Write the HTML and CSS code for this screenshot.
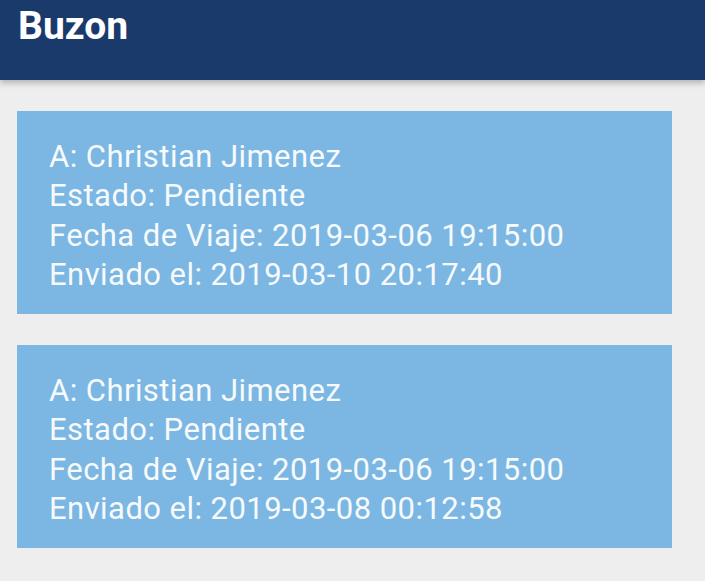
FILE: index.html
```html
<!DOCTYPE html>
<html lang="es">
<head>
<meta charset="utf-8">
<title>Buzon</title>
<link rel="stylesheet" href="styles.css">
</head>
<body>
<header class="appbar">
  <h1 class="title">Buzon</h1>
</header>
<main class="list">
  <section class="card">
    <p>A: Christian Jimenez</p>
    <p>Estado: Pendiente</p>
    <p>Fecha de Viaje: 2019-03-06 19:15:00</p>
    <p>Enviado el: 2019-03-10 20:17:40</p>
  </section>
  <section class="card">
    <p>A: Christian Jimenez</p>
    <p>Estado: Pendiente</p>
    <p>Fecha de Viaje: 2019-03-06 19:15:00</p>
    <p>Enviado el: 2019-03-08 00:12:58</p>
  </section>
</main>
</body>
</html>
```

FILE: styles.css
```css
html, body {
  margin: 0;
  padding: 0;
  background: #eeeeee;
  font-family: Roboto, "Liberation Sans", sans-serif;
  width: 705px;
  height: 581px;
  overflow: hidden;
}
.appbar {
  height: 80px;
  background: #1b3a6c;
  box-shadow: 0 3px 6px rgba(0,0,0,0.25);
  padding: 0 18px;
  box-sizing: border-box;
}
.title {
  margin: 0;
  color: #ffffff;
  font-size: 39px;
  font-weight: 700;
  line-height: 52px;
}
.list {
  display: flex;
  flex-direction: column;
  gap: 31px;
  padding: 31px 33px 0 17px;
}
.card {
  background: #7bb7e2;
  height: 203px;
  box-sizing: border-box;
  padding: 26px 32px 0 32px;
  color: #f7fafc;
}
.card p {
  margin: 0;
  font-size: 31px;
  line-height: 39.4px;
  letter-spacing: 0.45px;
}
```
